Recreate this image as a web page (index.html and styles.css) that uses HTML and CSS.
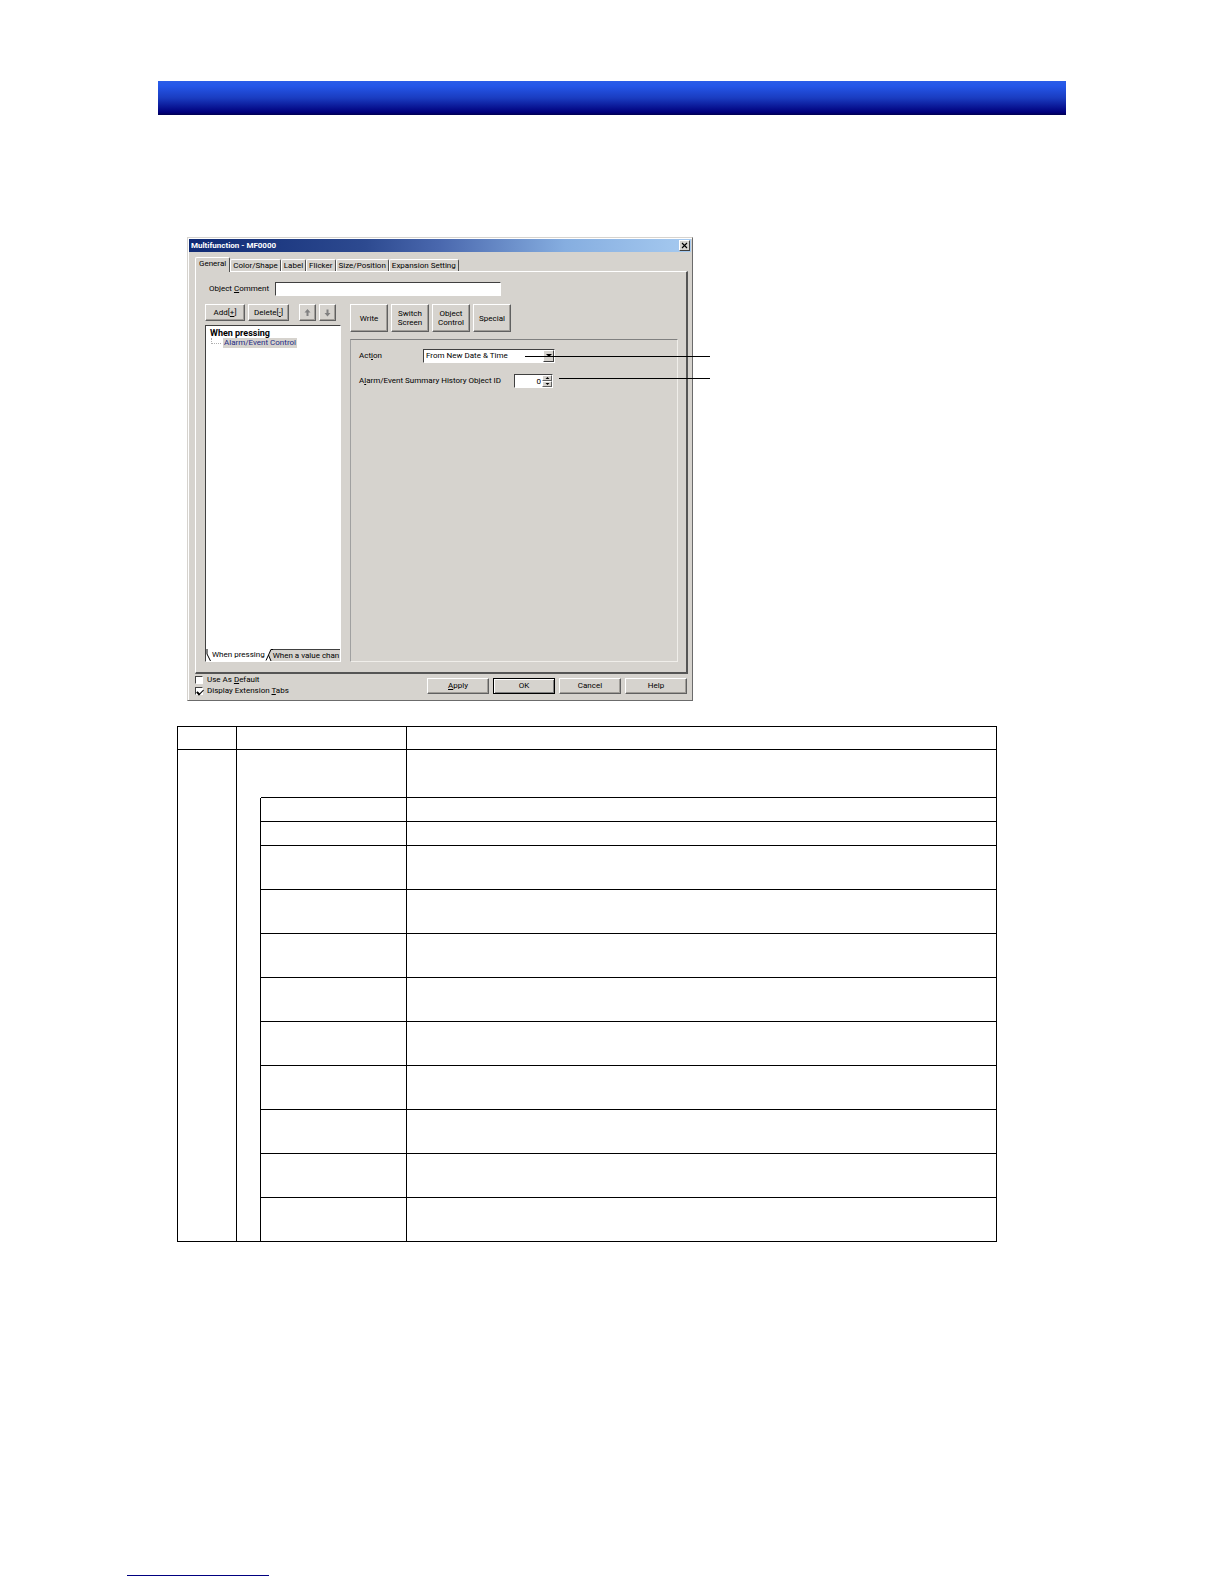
FILE: index.html
```html
<!DOCTYPE html>
<html lang="en">
<head>
<meta charset="utf-8">
<title>Multifunction - MF0000</title>
<link rel="stylesheet" href="styles.css">
</head>
<body>
<header class="banner"></header>
<main class="content">
  <div class="figure">
    <section class="dialog" aria-labelledby="dialog-title">
      <div class="titlebar">
        <h1 class="title" id="dialog-title">Multifunction - MF0000</h1>
        <button class="close" type="button" aria-label="Close">
          <svg width="7" height="7" viewBox="0 0 7 7"><path d="M1 1L6 6M6 1L1 6" stroke="#000" stroke-width="1.1"/></svg>
        </button>
      </div>
      <div class="tabs" role="tablist">
        <button class="tab tab-active" type="button" role="tab" aria-selected="true">General</button>
        <button class="tab" type="button" role="tab">Color/Shape</button>
        <button class="tab" type="button" role="tab">Label</button>
        <button class="tab" type="button" role="tab">Flicker</button>
        <button class="tab" type="button" role="tab">Size/Position</button>
        <button class="tab" type="button" role="tab">Expansion Setting</button>
      </div>
      <div class="panel">
        <div class="comment">
          <label class="comment-label" for="comment">Object <u>C</u>omment</label>
          <input class="field comment-field" id="comment" type="text">
        </div>
        <div class="columns">
          <div class="left">
            <div class="toolbar">
              <button class="btn add" type="button">Add[<u>+</u>]</button>
              <button class="btn delete" type="button">Delete[<u>-</u>]</button>
              <button class="btn arrow arrow-up" type="button" aria-label="Move up">
                <svg width="7" height="8" viewBox="0 0 7 8"><path d="M3.5 0L6.5 3.5H4.5V7H2.5V3.5H.5Z" fill="#808080"/></svg>
              </button>
              <button class="btn arrow" type="button" aria-label="Move down">
                <svg width="7" height="8" viewBox="0 0 7 8"><path d="M3.5 7.5L.5 4H2.5V.5H4.5V4H6.5Z" fill="#808080"/></svg>
              </button>
            </div>
            <div class="tree">
              <div class="tree-body">
                <div class="tree-root">When pressing</div>
                <div class="tree-item"><span class="branch"></span><span class="selected">Alarm/Event Control</span></div>
              </div>
              <div class="sheets">
                <svg width="6" height="12" viewBox="0 0 6 12"><path d="M1 0V5L4.5 12" fill="none" stroke="#000"/></svg>
                <button class="sheet" type="button">When pressing</button>
                <svg width="8" height="12" viewBox="0 0 8 12"><path d="M5 0H8V12H6L4 6Z" fill="#d6d3ce"/><path d="M1 11.500L6 .5H8M3.500 6L6 12" fill="none" stroke="#000"/></svg>
                <button class="sheet sheet-back" type="button">When a value chan</button>
              </div>
            </div>
          </div>
          <div class="right">
            <div class="kinds">
              <button class="btn kind" type="button">Write</button>
              <button class="btn kind" type="button">Switch<br>Screen</button>
              <button class="btn kind" type="button">Object<br>Control</button>
              <button class="btn kind" type="button">Special</button>
            </div>
            <div class="frame">
              <div class="row">
                <label class="action-label" for="action">Act<u>i</u>on</label>
                <div class="combo">
                  <select class="field action" id="action"><option>From New Date &amp; Time</option></select>
                  <span class="combo-arrow"><svg width="6" height="4" viewBox="0 0 6 4"><path d="M0 0H6L3 3Z"/></svg></span>
                </div>
              </div>
              <div class="row">
                <label class="id-label" for="object-id">A<u>l</u>arm/Event Summary History Object ID</label>
                <div class="spin">
                  <input class="field object-id" id="object-id" type="text" value="0">
                  <span class="spin-arrows">
                    <button class="step" type="button" aria-label="Increase"><svg width="5" height="2" viewBox="0 0 5 2"><path d="M.5 2L2.500 0L4.500 2Z"/></svg></button>
                    <button class="step" type="button" aria-label="Decrease"><svg width="5" height="2" viewBox="0 0 5 2"><path d="M.5 0L2.500 2L4.500 0Z"/></svg></button>
                  </span>
                </div>
              </div>
            </div>
          </div>
        </div>
      </div>
      <div class="actions">
        <div class="checks">
          <label class="check"><input class="box" type="checkbox"><span>Use As <u>D</u>efault</span></label>
          <label class="check"><input class="box" type="checkbox" checked><span>Display Extension <u>T</u>abs</span></label>
        </div>
        <div class="buttons">
          <button class="btn command" type="button"><u>A</u>pply</button>
          <button class="btn command ok" type="button">OK</button>
          <button class="btn command" type="button">Cancel</button>
          <button class="btn command" type="button">Help</button>
        </div>
      </div>
    </section>
    <span class="leader leader-action"></span>
    <span class="leader leader-id"></span>
  </div>
  <table class="grid">
    <colgroup><col class="col-no"><col class="col-indent"><col class="col-name"><col></colgroup>
    <tbody>
      <tr class="head"><td></td><td colspan="2"></td><td></td></tr>
      <tr class="intro"><td rowspan="12"></td><td class="open"></td><td></td><td></td></tr>
      <tr class="short"><td rowspan="11"></td><td></td><td></td></tr>
      <tr class="short"><td></td><td></td></tr>
      <tr class="tall"><td></td><td></td></tr>
      <tr class="tall"><td></td><td></td></tr>
      <tr class="tall"><td></td><td></td></tr>
      <tr class="tall"><td></td><td></td></tr>
      <tr class="tall"><td></td><td></td></tr>
      <tr class="tall"><td></td><td></td></tr>
      <tr class="tall"><td></td><td></td></tr>
      <tr class="tall"><td></td><td></td></tr>
      <tr class="tall"><td></td><td></td></tr>
    </tbody>
  </table>
</main>
<footer class="footer"><hr class="rule"></footer>
</body>
</html>
```
FILE: styles.css
```css
* { box-sizing: border-box; }

body {
  margin: 0;
  min-height: 100vh;
  display: flex;
  flex-direction: column;
  background: #fff;
  color: #000;
  font: 8px/10px Roboto, "Liberation Sans", Arial, sans-serif;
}

button, input, select {
  font: inherit;
  color: inherit;
  margin: 0;
  border-radius: 0;
}

svg { display: block; flex: none; }

u { text-underline-offset: 1px; }

.banner {
  height: 34px;
  margin: 81px 158px 0;
  background: linear-gradient(#2a5de8, #2456e8 15%, #1a3cc0 50%, #00007c 92%, #000050);
}

.content { padding: 122px 158px 0 177px; }

.figure {
  position: relative;
  max-width: 506px;
  margin-left: 10px;
}

/* Dialog window */
.dialog {
  padding: 1px;
  border: 1px solid;
  border-color: #d6d3ce #6b6b6b #6b6b6b #d6d3ce;
  background: #d6d3ce;
  box-shadow: inset 1px 1px #fff;
}

.titlebar {
  display: flex;
  align-items: center;
  justify-content: space-between;
  height: 13px;
  padding: 0 1px 0 2px;
  background: linear-gradient(90deg, #0f2a74, #2d4a90 35%, #4a68ae 50%, #86aee0 75%, #a6caf0);
}

.title {
  margin: 0;
  color: #fff;
  font-size: 8px;
  font-weight: bold;
}

.close {
  display: grid;
  place-items: center;
  width: 11px;
  height: 11px;
  padding: 0;
  border: 1px solid;
  border-color: #fff #404040 #404040 #fff;
  background: #d6d3ce;
}

.tabs {
  display: flex;
  align-items: flex-end;
  margin: 5px 0 0 6px;
}

.tab {
  height: 12px;
  padding: 0 2px;
  border: 1px solid;
  border-color: #fff #505050 transparent #fff;
  border-bottom: 0;
  border-radius: 2px 2px 0 0;
  background: #d6d3ce;
  white-space: nowrap;
}

.tab-active {
  position: relative;
  height: 15px;
  margin-bottom: -1px;
  padding: 0 3px 2px;
}

.panel {
  margin: 0 3px 0 6px;
  padding: 10px 8px 10px 9px;
  border: solid;
  border-width: 1px 2px 2px 1px;
  border-color: #fff #555 #555 #fff;
}

.comment {
  display: flex;
  align-items: center;
  padding-left: 4px;
  margin-bottom: 8px;
}

.comment-label { width: 66px; }

.field {
  height: 14px;
  padding: 0 2px;
  border: 1px solid;
  border-color: #404040 #fff #fff #404040;
  background: #fff;
  outline: 0;
}

.comment-field { width: 226px; }

.columns {
  display: grid;
  grid-template-columns: 136px 1fr;
  gap: 9px;
}

.toolbar {
  display: flex;
  gap: 3px;
  margin-bottom: 4px;
}

.btn {
  padding: 0;
  border: 1px solid;
  border-color: #fff #606060 #606060 #fff;
  background: #d6d3ce;
  box-shadow: inset -1px -1px #a09d98;
  text-align: center;
}

.add, .delete, .arrow { height: 17px; }
.add { width: 40px; }
.delete { width: 41px; }

.arrow {
  display: grid;
  place-items: center;
  width: 17px;
}

.arrow-up { margin-left: 7px; }

.tree {
  display: flex;
  flex-direction: column;
  min-height: 337px;
  border: 1px solid;
  border-color: #404040 #fff #fff #404040;
  background: #fff;
}

.tree-body { flex: 1; padding: 2px 4px; }

.tree-root { font-size: 9px; font-weight: bold; }

.tree-item { display: flex; gap: 2px; }

.branch {
  width: 10px;
  height: 6px;
  margin-left: 1px;
  border: dotted #b0b0b0;
  border-width: 0 0 1px 1px;
}

.selected {
  padding: 0 1px;
  background: #d6d3ce;
  color: #1c2a84;
}

.sheets { display: flex; height: 12px; }

.sheet {
  padding: 0;
  border: 0;
  background: #fff;
  white-space: nowrap;
}

.sheet-back {
  flex: 1;
  border-top: 1px solid #404040;
  background: #d6d3ce;
  text-align: left;
}

.right { display: flex; flex-direction: column; gap: 7px; }

.kinds { display: flex; gap: 3px; }

.kind { width: 38px; height: 28px; line-height: 9px; }

.frame {
  flex: 1;
  padding: 9px 8px;
  border: 1px solid;
  border-color: #808080 #f0eeea #f0eeea #a0a0a0;
}

.row {
  display: flex;
  align-items: center;
  margin-bottom: 11px;
}

.action-label { width: 64px; }
.id-label { width: 155px; white-space: nowrap; }

.combo, .spin { position: relative; display: flex; }

.action { width: 132px; appearance: none; }

.combo-arrow {
  position: absolute;
  top: 1px;
  right: 1px;
  display: grid;
  place-items: center;
  width: 11px;
  height: 12px;
  border: 1px solid;
  border-color: #fff #404040 #404040 #fff;
  background: #d6d3ce;
  pointer-events: none;
}

.object-id {
  width: 39px;
  padding-right: 11px;
  text-align: right;
}

.spin-arrows {
  position: absolute;
  top: 1px;
  right: 1px;
  display: grid;
  width: 10px;
}

.step {
  display: grid;
  place-items: center;
  height: 6px;
  padding: 0;
  border: 1px solid;
  border-color: #fff #606060 #606060 #fff;
  background: #d6d3ce;
}

.actions {
  display: flex;
  justify-content: space-between;
  padding: 1px 4px 3px 6px;
}

.checks { display: grid; gap: 1px; }

.check { display: flex; align-items: center; gap: 4px; }

.box {
  width: 8px;
  height: 8px;
  margin: 0;
  appearance: none;
  border: 1px solid;
  border-color: #404040 #fff #fff #404040;
  background: #fff;
}

.box:checked::before {
  content: "";
  display: block;
  width: 3px;
  height: 5px;
  margin-left: 2px;
  border: solid #000;
  border-width: 0 1px 2px 0;
  transform: rotate(45deg);
}

.buttons { display: flex; gap: 4px; padding-top: 3px; }

.command { width: 62px; height: 16px; }

.ok { border-color: #000; box-shadow: inset 1px 1px #fff, inset -1px -1px #808080; }

/* Callout lines that run from a control out past the dialog */
.leader {
  position: absolute;
  right: -17px;
  height: 1px;
  background: #000;
}

.leader-action { top: 119px; left: 338px; }
.leader-id { top: 141px; left: 372px; }

/* Description table */
.grid {
  width: 100%;
  max-width: 820px;
  margin-top: 25px;
  border: solid #000;
  border-width: 1px 0 0 1px;
  border-spacing: 0;
  table-layout: fixed;
}

.grid td {
  padding: 0;
  border: solid #000;
  border-width: 0 1px 1px 0;
}

.grid .open { border: 0; }

.col-no { width: 59px; }
.col-indent { width: 24px; }
.col-name { width: 146px; }

.head { height: 23px; }
.intro { height: 48px; }
.short { height: 24px; }
.tall { height: 44px; }

.footer { margin-top: auto; padding: 24px 127px 8px; }

.rule {
  width: 142px;
  margin: 0;
  border: 0;
  border-top: 1px solid #000080;
}
```
